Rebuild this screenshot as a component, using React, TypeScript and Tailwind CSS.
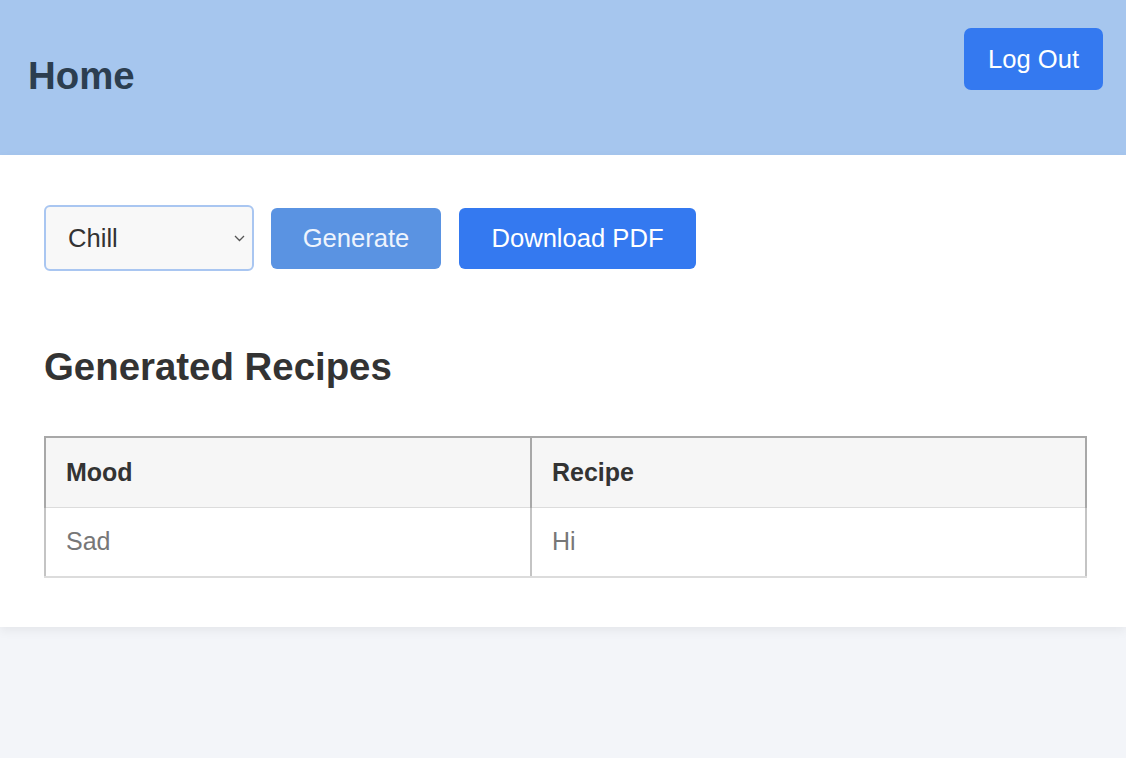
import React from 'react';

const rows = [{ mood: 'Sad', recipe: 'Hi' }];

export default function App() {
  return (
    <div className="min-h-[758px] bg-[#f3f5f9] font-['Liberation_Sans',Arial,sans-serif]">
      <header className="h-[155px] bg-[#a6c6ee] flex justify-between pl-[28px] pr-[23px]">
        <h1 className="self-center mt-[-4px] text-[38.4px] font-bold text-[#2c3e50]">Home</h1>
        <button className="mt-[28px] h-[62px] w-[139px] rounded-[7px] bg-[#3479f0] text-[25.6px] text-white">
          Log Out
        </button>
      </header>

      <main className="bg-white pt-[50px] pb-[49px] pl-[44px] shadow-[0_4px_10px_rgba(0,0,0,0.06)]">
        <div className="flex items-center">
          <div className="relative w-[210px] h-[66px]">
            <select
              defaultValue="Chill"
              className="appearance-none w-full h-full rounded-[6px] border-2 border-[#a9c6f1] bg-[#f8f8f8] pl-[22px] text-[25.6px] text-[#333] outline-none"
            >
              <option>Happy</option>
              <option>Sad</option>
              <option>Chill</option>
            </select>
            <svg className="absolute right-[9px] top-[30px] pointer-events-none" width="11" height="7" viewBox="0 0 11 7" fill="none">
              <path d="M1 1l4.5 4.5L10 1" stroke="#555" strokeWidth="1.3" />
            </svg>
          </div>
          <button className="ml-[17px] h-[61px] w-[170px] rounded-[6px] bg-[#5a93e2] text-[25.6px] text-[#eef4fd]">
            Generate
          </button>
          <button className="ml-[18px] h-[61px] w-[237px] rounded-[6px] bg-[#3479f0] text-[25.6px] text-white">
            Download PDF
          </button>
        </div>

        <h2 className="mt-[67px] text-[38.4px] font-bold text-[#333]">Generated Recipes</h2>

        <table className="mt-[40px] w-[1043px] border-collapse text-[25px]">
          <thead>
            <tr className="bg-[#f6f6f6]">
              <th className="h-[71px] w-[486px] border-2 border-[#a8a8a8] border-b border-b-[#dcdcdc] px-[20px] text-left font-bold text-[#333]">Mood</th>
              <th className="h-[71px] border-2 border-[#a8a8a8] border-b border-b-[#dcdcdc] px-[20px] text-left font-bold text-[#333]">Recipe</th>
            </tr>
          </thead>
          <tbody>
            {rows.map((r, i) => (
              <tr key={i}>
                <td className="h-[69px] border-x-2 border-[#c4c4c4] border-b-2 border-b-[#dcdcdc] px-[20px] text-[#777]">{r.mood}</td>
                <td className="h-[69px] border-x-2 border-[#c4c4c4] border-b-2 border-b-[#dcdcdc] px-[20px] text-[#777]">{r.recipe}</td>
              </tr>
            ))}
          </tbody>
        </table>
      </main>
    </div>
  );
}
